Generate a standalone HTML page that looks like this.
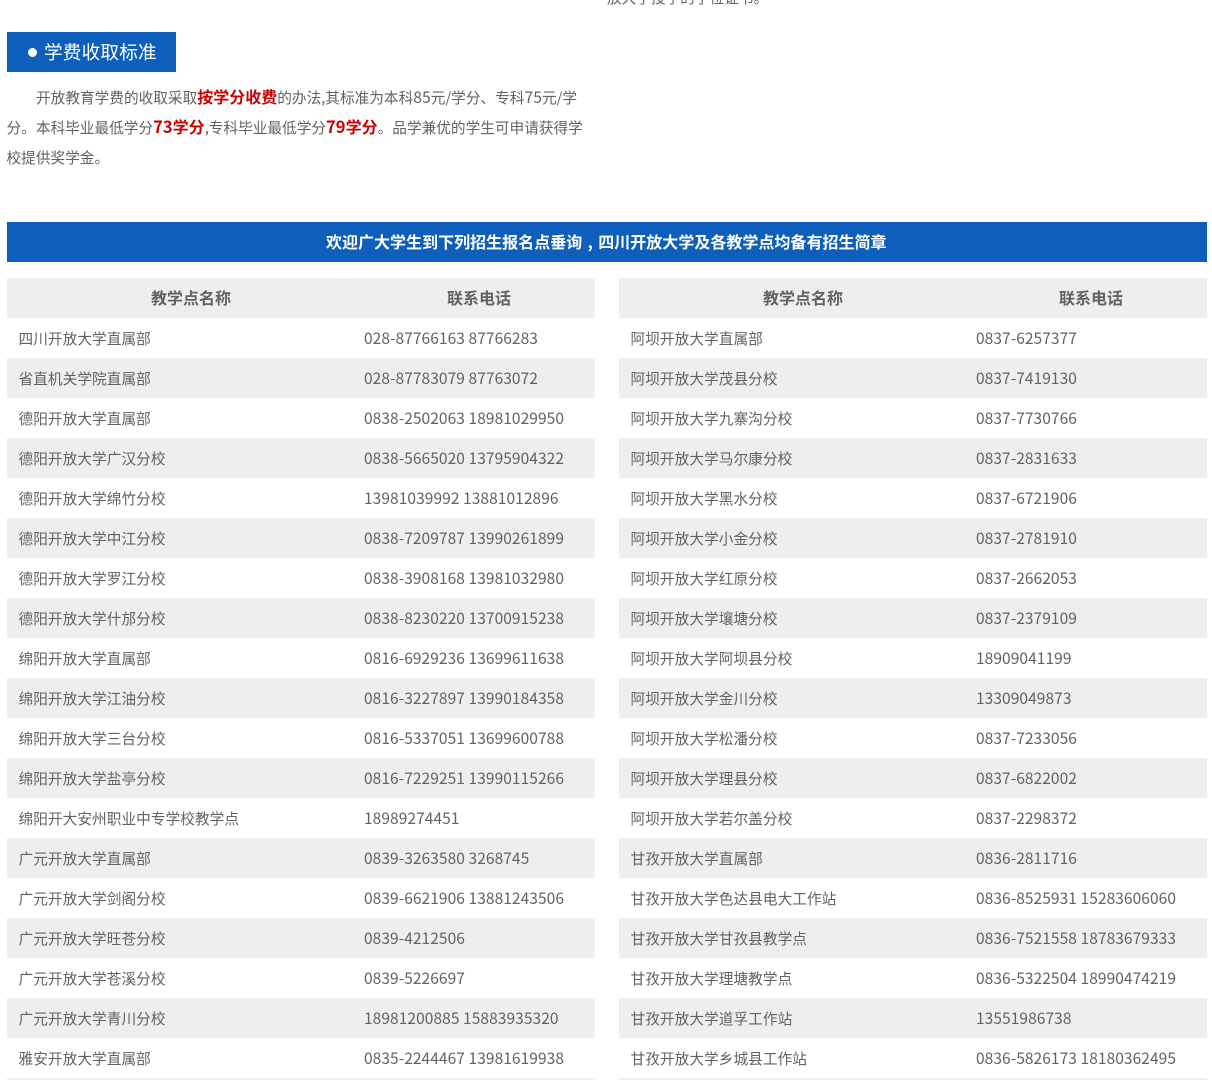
<!DOCTYPE html>
<html lang="zh">
<head>
<meta charset="utf-8">
<title>学费收取标准</title>
<style>
html,body{margin:0;padding:0;background:#fff;width:1212px;height:1080px;overflow:hidden}
body{position:relative;font-family:"Liberation Sans","Noto Sans CJK SC",sans-serif;color:#626262;font-size:14.67px}
#cut{position:absolute;left:607px;top:-17px;line-height:30px;white-space:nowrap;font-family:"Noto Sans CJK SC",sans-serif}
#tag{position:absolute;left:7px;top:32px;width:169px;height:40px;background:#0e5fbc;color:#fff;font-size:18.67px;line-height:40px;font-family:"Noto Sans CJK SC",sans-serif;white-space:nowrap}
#tag i{position:absolute;left:21px;top:16px;width:9px;height:9px;border-radius:50%;background:#fff}
#tag span{position:absolute;left:37px;top:0;letter-spacing:.15px}
#intro{position:absolute;left:7px;top:82px;width:582px;line-height:30px;font-family:"Noto Sans CJK SC",sans-serif}
#intro div{position:absolute;left:-.5px;white-space:nowrap}
#intro b{color:#c00;font-size:16px;font-weight:700}
#intro u{text-decoration:none;font-size:15.8px}
#intro b u{font-size:16.6px}
#banner{position:absolute;left:7px;top:222px;width:1200px;height:40px;background:#0e5fbc;color:#fff;font-size:16px;font-weight:700;line-height:40px;font-family:"Noto Sans CJK SC",sans-serif}
#banner span{position:absolute;left:319px;top:-1px;white-space:nowrap;letter-spacing:.015px}
#banner em{display:inline-block;width:16px;text-align:center;font-style:normal}
.t{position:absolute;top:278px;width:588px;font-family:"Noto Sans CJK SC",sans-serif}
#t1{left:7px}#t2{left:619px}
.r{position:relative;height:40px;line-height:40px;white-space:nowrap}
.r:nth-child(odd){background:#eee}
.r b,.r i{position:absolute;top:1px;font-weight:400;font-style:normal}
.r b{left:11.5px;letter-spacing:.05px}
.r i{left:357px;top:0;font-size:15.5px;letter-spacing:.08px}
.h b,.h i{top:-1px;font-weight:700;font-size:16px;letter-spacing:0}
.h b{left:144px}.h i{left:440px}
</style>
</head>
<body>
<div id="cut">放大学授予的学位证书。</div>
<div id="tag"><i></i><span>学费收取标准</span></div>
<div id="intro">
<div style="top:-1px;left:29px">开放教育学费的收取采取<b>按学分收费</b>的办法,其标准为本科<u>85</u>元/学分、专科<u>75</u>元/学</div>
<div style="top:29px">分。本科毕业最低学分<b><u>73</u>学分</b>,专科毕业最低学分<b><u>79</u>学分</b>。品学兼优的学生可申请获得学</div>
<div style="top:61px">校提供奖学金。</div>
</div>
<div id="banner"><span>欢迎广大学生到下列招生报名点垂询<em>,</em>四川开放大学及各教学点均备有招生简章</span></div>

<div class="t" id="t1">
<div class="r h"><b>教学点名称</b><i>联系电话</i></div>
<div class="r"><b>四川开放大学直属部</b><i>028-87766163 87766283</i></div>
<div class="r"><b>省直机关学院直属部</b><i>028-87783079 87763072</i></div>
<div class="r"><b>德阳开放大学直属部</b><i>0838-2502063 18981029950</i></div>
<div class="r"><b>德阳开放大学广汉分校</b><i>0838-5665020 13795904322</i></div>
<div class="r"><b>德阳开放大学绵竹分校</b><i>13981039992 13881012896</i></div>
<div class="r"><b>德阳开放大学中江分校</b><i>0838-7209787 13990261899</i></div>
<div class="r"><b>德阳开放大学罗江分校</b><i>0838-3908168 13981032980</i></div>
<div class="r"><b>德阳开放大学什邡分校</b><i>0838-8230220 13700915238</i></div>
<div class="r"><b>绵阳开放大学直属部</b><i>0816-6929236 13699611638</i></div>
<div class="r"><b>绵阳开放大学江油分校</b><i>0816-3227897 13990184358</i></div>
<div class="r"><b>绵阳开放大学三台分校</b><i>0816-5337051 13699600788</i></div>
<div class="r"><b>绵阳开放大学盐亭分校</b><i>0816-7229251 13990115266</i></div>
<div class="r"><b>绵阳开大安州职业中专学校教学点</b><i>18989274451</i></div>
<div class="r"><b>广元开放大学直属部</b><i>0839-3263580 3268745</i></div>
<div class="r"><b>广元开放大学剑阁分校</b><i>0839-6621906 13881243506</i></div>
<div class="r"><b>广元开放大学旺苍分校</b><i>0839-4212506</i></div>
<div class="r"><b>广元开放大学苍溪分校</b><i>0839-5226697</i></div>
<div class="r"><b>广元开放大学青川分校</b><i>18981200885 15883935320</i></div>
<div class="r"><b>雅安开放大学直属部</b><i>0835-2244467 13981619938</i></div>
<div class="r"></div>
</div>

<div class="t" id="t2">
<div class="r h"><b>教学点名称</b><i>联系电话</i></div>
<div class="r"><b>阿坝开放大学直属部</b><i>0837-6257377</i></div>
<div class="r"><b>阿坝开放大学茂县分校</b><i>0837-7419130</i></div>
<div class="r"><b>阿坝开放大学九寨沟分校</b><i>0837-7730766</i></div>
<div class="r"><b>阿坝开放大学马尔康分校</b><i>0837-2831633</i></div>
<div class="r"><b>阿坝开放大学黑水分校</b><i>0837-6721906</i></div>
<div class="r"><b>阿坝开放大学小金分校</b><i>0837-2781910</i></div>
<div class="r"><b>阿坝开放大学红原分校</b><i>0837-2662053</i></div>
<div class="r"><b>阿坝开放大学壤塘分校</b><i>0837-2379109</i></div>
<div class="r"><b>阿坝开放大学阿坝县分校</b><i>18909041199</i></div>
<div class="r"><b>阿坝开放大学金川分校</b><i>13309049873</i></div>
<div class="r"><b>阿坝开放大学松潘分校</b><i>0837-7233056</i></div>
<div class="r"><b>阿坝开放大学理县分校</b><i>0837-6822002</i></div>
<div class="r"><b>阿坝开放大学若尔盖分校</b><i>0837-2298372</i></div>
<div class="r"><b>甘孜开放大学直属部</b><i>0836-2811716</i></div>
<div class="r"><b>甘孜开放大学色达县电大工作站</b><i>0836-8525931 15283606060</i></div>
<div class="r"><b>甘孜开放大学甘孜县教学点</b><i>0836-7521558 18783679333</i></div>
<div class="r"><b>甘孜开放大学理塘教学点</b><i>0836-5322504 18990474219</i></div>
<div class="r"><b>甘孜开放大学道孚工作站</b><i>13551986738</i></div>
<div class="r"><b>甘孜开放大学乡城县工作站</b><i>0836-5826173 18180362495</i></div>
<div class="r"></div>
</div>
</body>
</html>
